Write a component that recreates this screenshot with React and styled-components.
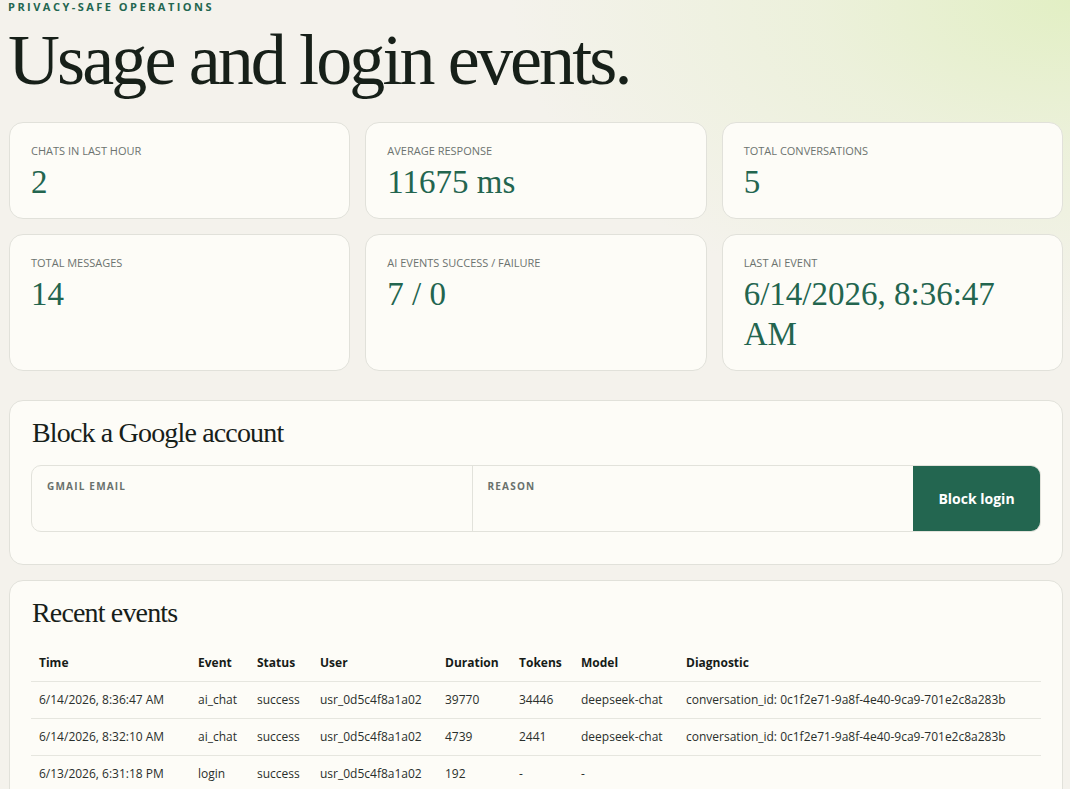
import styled, { createGlobalStyle } from 'styled-components'

const GlobalStyle = createGlobalStyle`
  * {
    box-sizing: border-box;
  }
  html, body {
    margin: 0;
    padding: 0;
  }
  body {
    font-family: 'Open Sans', 'Liberation Sans', sans-serif;
    color: #1b211d;
    background:
      radial-gradient(ellipse 560px 330px at 100% 0, rgba(226, 239, 196, 1) 0%, rgba(233, 240, 212, 0.7) 45%, rgba(244, 242, 236, 0) 100%),
      #f4f2ec;
    min-height: 100vh;
  }
`

const stats = [
  { label: 'Chats in last hour', value: '2' },
  { label: 'Average response', value: '11675 ms' },
  { label: 'Total conversations', value: '5' },
  { label: 'Total messages', value: '14' },
  { label: 'AI events success / failure', value: '7 / 0' },
  { label: 'Last AI event', value: '6/14/2026, 8:36:47 AM' },
]

const columns = [
  { title: 'Time', width: 159 },
  { title: 'Event', width: 59 },
  { title: 'Status', width: 63 },
  { title: 'User', width: 125 },
  { title: 'Duration', width: 74 },
  { title: 'Tokens', width: 62 },
  { title: 'Model', width: 105 },
  { title: 'Diagnostic' },
]

const events = [
  ['6/14/2026, 8:36:47 AM', 'ai_chat', 'success', 'usr_0d5c4f8a1a02', '39770', '34446', 'deepseek-chat', 'conversation_id: 0c1f2e71-9a8f-4e40-9ca9-701e2c8a283b'],
  ['6/14/2026, 8:32:10 AM', 'ai_chat', 'success', 'usr_0d5c4f8a1a02', '4739', '2441', 'deepseek-chat', 'conversation_id: 0c1f2e71-9a8f-4e40-9ca9-701e2c8a283b'],
  ['6/13/2026, 6:31:18 PM', 'login', 'success', 'usr_0d5c4f8a1a02', '192', '-', '-', ''],
]

function StatCard({ label, value }) {
  return (
    <StyledStat>
      <span className='stat-label'>{label}</span>
      <strong className='stat-value'>{value}</strong>
    </StyledStat>
  )
}

function FormField({ name, labelText, last }) {
  return (
    <StyledField $last={last}>
      <label htmlFor={name}>{labelText}</label>
      <input id={name} name={name} type='text' />
    </StyledField>
  )
}

export default function App() {
  return (
    <Page>
      <GlobalStyle />
      <Eyebrow>Privacy-safe operations</Eyebrow>
      <Title>Usage and login events.</Title>

      <StatGrid>
        {stats.map((s) => (
          <StatCard key={s.label} {...s} />
        ))}
      </StatGrid>

      <Panel $gap={29}>
        <PanelTitle>Block a Google account</PanelTitle>
        <BlockForm onSubmit={(e) => e.preventDefault()}>
          <FormField name='email' labelText='Gmail email' />
          <FormField name='reason' labelText='Reason' last />
          <BlockButton type='submit'>Block login</BlockButton>
        </BlockForm>
      </Panel>

      <Panel $gap={15}>
        <PanelTitle>Recent events</PanelTitle>
        <EventsTable>
          <colgroup>
            {columns.map((c) => (
              <Col key={c.title} $width={c.width} />
            ))}
          </colgroup>
          <thead>
            <tr>
              {columns.map((c) => (
                <th key={c.title}>{c.title}</th>
              ))}
            </tr>
          </thead>
          <tbody>
            {events.map((row, i) => (
              <tr key={i}>
                {row.map((cell, j) => (
                  <td key={j}>{cell}</td>
                ))}
              </tr>
            ))}
          </tbody>
        </EventsTable>
      </Panel>
    </Page>
  )
}

const Page = styled.main`
  padding: 0 7px 40px 9px;
`

const Eyebrow = styled.p`
  margin: 0 0 0 -1px;
  font-size: 11px;
  line-height: 14px;
  font-weight: 700;
  letter-spacing: 0.225em;
  text-transform: uppercase;
  color: #236650;
`

const Title = styled.h1`
  margin: 10px 0 26px -1px;
  font-family: 'Liberation Serif', serif;
  font-weight: 400;
  font-size: 72px;
  line-height: 1;
  letter-spacing: -0.04em;
  color: #172019;
`

const StatGrid = styled.section`
  display: grid;
  grid-template-columns: repeat(3, 1fr);
  gap: 15px;
`

const StyledStat = styled.article`
  display: flex;
  flex-direction: column;
  gap: 4px;
  padding: 20px 21px 16px;
  background: #fdfcf7;
  border: 1px solid #e1e1da;
  border-radius: 14px;

  .stat-label {
    font-size: 11px;
    line-height: 15px;
    text-transform: uppercase;
    color: #6c736f;
  }

  .stat-value {
    font-family: 'Liberation Serif', serif;
    font-weight: 400;
    font-size: 33px;
    line-height: 40px;
    color: #23654f;
  }
`

const Panel = styled.section`
  margin-top: ${(p) => p.$gap}px;
  padding: 15px 21px 32px;
  background: #fdfcf7;
  border: 1px solid #e1e1da;
  border-radius: 14px;
`

const PanelTitle = styled.h2`
  margin: 0 0 15px 1px;
  font-family: 'Liberation Serif', serif;
  font-weight: 400;
  font-size: 28px;
  line-height: 1.2;
  letter-spacing: -0.03em;
  color: #172019;
`

const BlockForm = styled.form`
  display: grid;
  grid-template-columns: 1fr 1fr 127px;
  height: 67px;
  border: 1px solid #e2e2db;
  border-radius: 10px;
  overflow: hidden;
`

const StyledField = styled.div`
  display: flex;
  flex-direction: column;
  padding: 13px 15px 0;
  border-right: ${(p) => (p.$last ? 'none' : '1px solid #e2e2db')};

  label {
    font-size: 10px;
    line-height: 14px;
    font-weight: 700;
    letter-spacing: 0.12em;
    text-transform: uppercase;
    color: #69716d;
  }

  input {
    margin-top: 6px;
    border: none;
    background: transparent;
    font: inherit;
    font-size: 14px;
    outline: none;
  }
`

const BlockButton = styled.button`
  border: none;
  background: #236650;
  color: #ffffff;
  font-family: 'Open Sans', 'Liberation Sans', sans-serif;
  font-size: 14px;
  font-weight: 700;
  cursor: pointer;
`

const Col = styled.col`
  width: ${(p) => (p.$width ? `${p.$width}px` : 'auto')};
`

const EventsTable = styled.table`
  width: 100%;
  table-layout: fixed;
  border-collapse: collapse;
  font-size: 12px;

  th,
  td {
    height: 37px;
    padding: 0 8px;
    text-align: left;
    white-space: nowrap;
    border-bottom: 1px solid #e6e6df;
  }

  th {
    font-weight: 700;
    color: #161b18;
  }

  td {
    color: #2a2f2c;
  }
`
